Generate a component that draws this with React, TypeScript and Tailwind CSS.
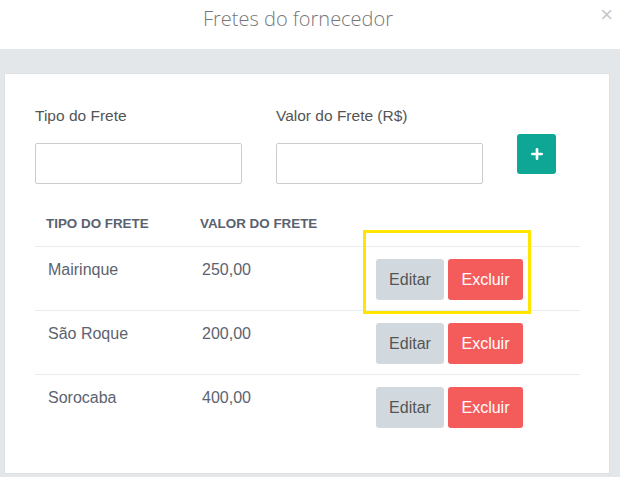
import { Plus } from 'lucide-react';

const rows = [
  { tipo: 'Mairinque', valor: '250,00' },
  { tipo: 'São Roque', valor: '200,00' },
  { tipo: 'Sorocaba', valor: '400,00' },
];

export default function App() {
  return (
    <div className="w-[620px] h-[477px] bg-[#e4e7ea] overflow-hidden" style={{ fontFamily: '"Liberation Sans", Arial, sans-serif' }}>
      <div className="relative h-[49px] bg-white flex items-center justify-center pr-[24px]">
        <h2 className="text-[20px] font-light text-[#777] pb-[12px]" style={{ fontFamily: '"Open Sans", sans-serif' }}>
          Fretes do fornecedor
        </h2>
        <span className="absolute right-[7px] top-[1px] text-[22px] leading-[28px] text-[#c8c8c8]">×</span>
      </div>

      <div className="mt-[24px] ml-[4px] w-[606px] h-[401px] bg-white border border-[#dde1e4] px-[30px] pt-[32px]">
        <div className="flex items-start">
          <div className="w-[207px]">
            <label className="block text-[15.5px] text-[#555] h-[20px] leading-[20px]">Tipo do Frete</label>
            <input className="mt-[17px] block w-[207px] h-[41px] border border-[#ccc] rounded-[2px]" />
          </div>
          <div className="ml-[34px] w-[207px]">
            <label className="block text-[15.5px] text-[#555] h-[20px] leading-[20px]">Valor do Frete (R$)</label>
            <input className="mt-[17px] block w-[207px] h-[41px] border border-[#ccc] rounded-[2px]" />
          </div>
          <button className="ml-[34px] mt-[28px] w-[39px] h-[40px] rounded-[3px] bg-[#0ea795] flex items-center justify-center">
            <Plus className="w-[16px] h-[16px] text-white" strokeWidth={4} />
          </button>
        </div>

        <div className="relative mt-[20px] w-[545px]">
          <div className="flex h-[43px] items-center text-[13.4px] font-bold text-[#5a6270] border-b border-[#e9edf0] pb-[2px]">
            <span className="w-[165px] pl-[11px]">TIPO DO FRETE</span>
            <span>VALOR DO FRETE</span>
          </div>
          {rows.map((r, i) => (
            <div key={r.tipo} className={`flex h-[64px] pt-[12px] text-[16px] text-[#5c6370] ${i < rows.length - 1 ? 'border-b border-[#e9edf0]' : ''}`}>
              <span className="w-[167px] pl-[13px] leading-[22px]">{r.tipo}</span>
              <span className="w-[174px] leading-[22px]">{r.valor}</span>
              <div className="flex gap-[4px] h-[41px]">
                <button className="w-[68px] h-[41px] rounded-[3px] bg-[#d1d9de] text-[#555]">Editar</button>
                <button className="w-[75px] h-[41px] rounded-[3px] bg-[#f45b5b] text-white">Excluir</button>
              </div>
            </div>
          ))}
          <div className="absolute left-[328px] top-[26px] w-[168px] h-[84px] border-[3px] border-[#ffe600] pointer-events-none" />
        </div>
      </div>
    </div>
  );
}
